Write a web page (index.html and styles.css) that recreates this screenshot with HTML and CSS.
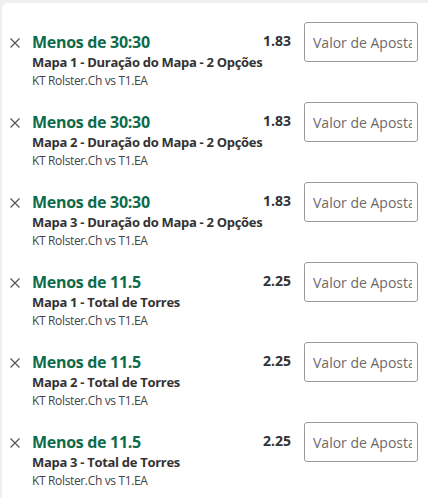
FILE: index.html
```
<!DOCTYPE html>
<html lang="pt">
<head>
<meta charset="utf-8">
<link rel="stylesheet" href="styles.css">
</head>
<body>
<div class="panel">
  <div class="bet">
    <span class="close"><svg viewBox="0 0 10 10" width="10" height="10"><path d="M0.5 0.5L9.5 9.5M9.5 0.5L0.5 9.5" stroke="#555" stroke-width="1.2" fill="none"/></svg></span>
    <div class="info">
      <div class="title">Menos de 30:30</div>
      <div class="market">Mapa 1 - Duração do Mapa - 2 Opções</div>
      <div class="match">KT Rolster.Ch vs T1.EA</div>
    </div>
    <div class="odds">1.83</div>
    <input class="stake" type="text" placeholder="Valor de Aposta">
  </div>
  <div class="bet">
    <span class="close"><svg viewBox="0 0 10 10" width="10" height="10"><path d="M0.5 0.5L9.5 9.5M9.5 0.5L0.5 9.5" stroke="#555" stroke-width="1.2" fill="none"/></svg></span>
    <div class="info">
      <div class="title">Menos de 30:30</div>
      <div class="market">Mapa 2 - Duração do Mapa - 2 Opções</div>
      <div class="match">KT Rolster.Ch vs T1.EA</div>
    </div>
    <div class="odds">1.83</div>
    <input class="stake" type="text" placeholder="Valor de Aposta">
  </div>
  <div class="bet">
    <span class="close"><svg viewBox="0 0 10 10" width="10" height="10"><path d="M0.5 0.5L9.5 9.5M9.5 0.5L0.5 9.5" stroke="#555" stroke-width="1.2" fill="none"/></svg></span>
    <div class="info">
      <div class="title">Menos de 30:30</div>
      <div class="market">Mapa 3 - Duração do Mapa - 2 Opções</div>
      <div class="match">KT Rolster.Ch vs T1.EA</div>
    </div>
    <div class="odds">1.83</div>
    <input class="stake" type="text" placeholder="Valor de Aposta">
  </div>
  <div class="bet">
    <span class="close"><svg viewBox="0 0 10 10" width="10" height="10"><path d="M0.5 0.5L9.5 9.5M9.5 0.5L0.5 9.5" stroke="#555" stroke-width="1.2" fill="none"/></svg></span>
    <div class="info">
      <div class="title">Menos de 11.5</div>
      <div class="market">Mapa 1 - Total de Torres</div>
      <div class="match">KT Rolster.Ch vs T1.EA</div>
    </div>
    <div class="odds">2.25</div>
    <input class="stake" type="text" placeholder="Valor de Aposta">
  </div>
  <div class="bet">
    <span class="close"><svg viewBox="0 0 10 10" width="10" height="10"><path d="M0.5 0.5L9.5 9.5M9.5 0.5L0.5 9.5" stroke="#555" stroke-width="1.2" fill="none"/></svg></span>
    <div class="info">
      <div class="title">Menos de 11.5</div>
      <div class="market">Mapa 2 - Total de Torres</div>
      <div class="match">KT Rolster.Ch vs T1.EA</div>
    </div>
    <div class="odds">2.25</div>
    <input class="stake" type="text" placeholder="Valor de Aposta">
  </div>
  <div class="bet">
    <span class="close"><svg viewBox="0 0 10 10" width="10" height="10"><path d="M0.5 0.5L9.5 9.5M9.5 0.5L0.5 9.5" stroke="#555" stroke-width="1.2" fill="none"/></svg></span>
    <div class="info">
      <div class="title">Menos de 11.5</div>
      <div class="market">Mapa 3 - Total de Torres</div>
      <div class="match">KT Rolster.Ch vs T1.EA</div>
    </div>
    <div class="odds">2.25</div>
    <input class="stake" type="text" placeholder="Valor de Aposta">
  </div>
</div>
</body>
</html>
```
FILE: styles.css
```
html, body {
  margin: 0;
  padding: 0;
  background: #efefef;
  height: 100%;
  overflow: hidden;
}
body {
  font-family: "Open Sans", "Noto Sans", sans-serif;
  color: #333;
}
.panel {
  margin: 3px 0 0 2px;
  background: #fff;
  border-top-left-radius: 6px;
  height: 495px;
}
.bet {
  display: flex;
  align-items: flex-start;
  height: 80px;
  padding-left: 8px;
}
.close {
  width: 22px;
  padding-top: 35px;
  display: flex;
}
.info {
  flex: 1;
  padding-top: 29px;
  min-width: 0;
}
.title {
  font-size: 16px;
  font-weight: 700;
  line-height: 20px;
  color: #0d6b49;
  letter-spacing: -0.3px;
}
.market {
  font-size: 13px;
  font-weight: 700;
  line-height: 20px;
  color: #333;
  letter-spacing: -0.3px;
  white-space: nowrap;
}
.match {
  font-size: 12px;
  line-height: 18px;
  color: #444;
  letter-spacing: -0.35px;
}
.odds {
  padding-top: 28px;
  font-size: 14px;
  font-weight: 700;
  line-height: 20px;
  color: #333;
}
.stake {
  margin: 19px 10px 0 13px;
  width: 114px;
  height: 40px;
  box-sizing: border-box;
  border: 1px solid #9a9a9a;
  border-radius: 3px;
  padding: 0 5px 0 8px;
  font-family: "Open Sans", "Noto Sans", sans-serif;
  font-size: 14px;
  color: #333;
  background: #fff;
  outline: none;
}
.stake::placeholder {
  color: #6b6b6b;
  opacity: 1;
}
```
